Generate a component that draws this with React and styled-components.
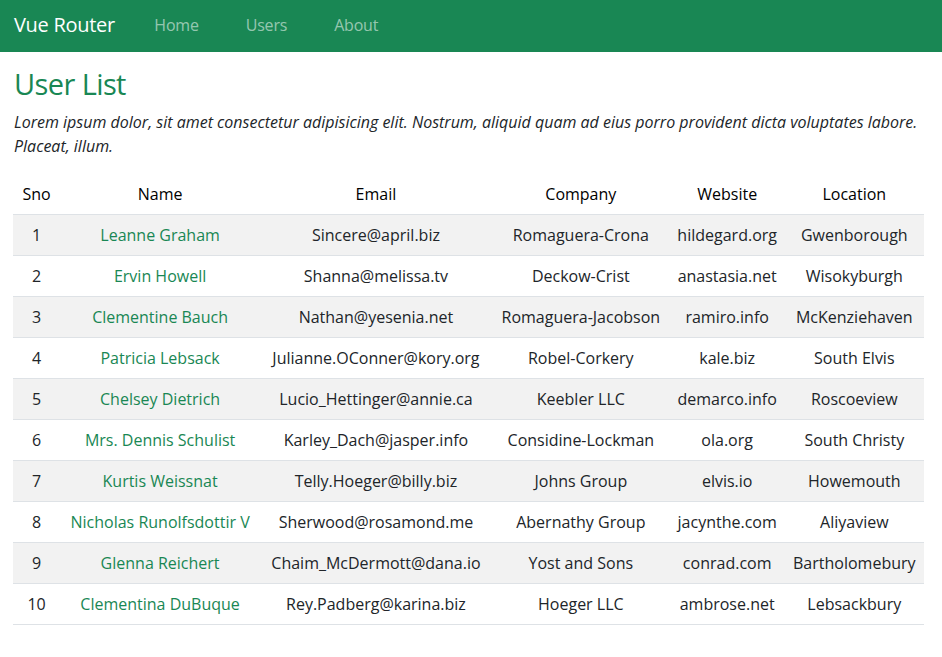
import React from 'react';
import styled, { createGlobalStyle } from 'styled-components';

const users = [
    ['Leanne Graham', 'Sincere@april.biz', 'Romaguera-Crona', 'hildegard.org', 'Gwenborough'],
    ['Ervin Howell', 'Shanna@melissa.tv', 'Deckow-Crist', 'anastasia.net', 'Wisokyburgh'],
    ['Clementine Bauch', 'Nathan@yesenia.net', 'Romaguera-Jacobson', 'ramiro.info', 'McKenziehaven'],
    ['Patricia Lebsack', 'Julianne.OConner@kory.org', 'Robel-Corkery', 'kale.biz', 'South Elvis'],
    ['Chelsey Dietrich', 'Lucio_Hettinger@annie.ca', 'Keebler LLC', 'demarco.info', 'Roscoeview'],
    ['Mrs. Dennis Schulist', 'Karley_Dach@jasper.info', 'Considine-Lockman', 'ola.org', 'South Christy'],
    ['Kurtis Weissnat', 'Telly.Hoeger@billy.biz', 'Johns Group', 'elvis.io', 'Howemouth'],
    ['Nicholas Runolfsdottir V', 'Sherwood@rosamond.me', 'Abernathy Group', 'jacynthe.com', 'Aliyaview'],
    ['Glenna Reichert', 'Chaim_McDermott@dana.io', 'Yost and Sons', 'conrad.com', 'Bartholomebury'],
    ['Clementina DuBuque', 'Rey.Padberg@karina.biz', 'Hoeger LLC', 'ambrose.net', 'Lebsackbury']
];

const GlobalStyle = createGlobalStyle`
    body {
        margin: 0;
        font-family: "Open Sans", "Noto Sans", sans-serif;
        font-size: 16px;
        line-height: 1.5;
        color: #212529;
        background: #fff;
    }
`;

const App = () => (
    <>
        <GlobalStyle />
        <Navbar>
            <Brand>Vue Router</Brand>
            <NavLink>Home</NavLink>
            <NavLink>Users</NavLink>
            <NavLink>About</NavLink>
        </Navbar>
        <Main>
            <Title>User List</Title>
            <Intro>
                Lorem ipsum dolor, sit amet consectetur adipisicing elit.
                Nostrum, aliquid quam ad eius porro provident dicta voluptates
                labore. Placeat, illum.
            </Intro>
            <Table>
                <thead>
                    <tr>
                        <Th>Sno</Th>
                        <Th>Name</Th>
                        <Th>Email</Th>
                        <Th>Company</Th>
                        <Th>Website</Th>
                        <Th>Location</Th>
                    </tr>
                </thead>
                <tbody>
                    {users.map((u, i) => (
                        <Row key={u[0]} striped={i % 2 === 0}>
                            <Td>{i + 1}</Td>
                            <Td>
                                <NameLink>{u[0]}</NameLink>
                            </Td>
                            <Td>{u[1]}</Td>
                            <Td>{u[2]}</Td>
                            <Td>{u[3]}</Td>
                            <Td>{u[4]}</Td>
                        </Row>
                    ))}
                </tbody>
            </Table>
        </Main>
    </>
);

export default App;

// Style
const Navbar = styled.nav`
    display: flex;
    align-items: center;
    height: 52px;
    padding: 0 14px 2px;
    box-sizing: border-box;
    background-color: #198754;
`;

const Brand = styled.span`
    font-size: 20px;
    letter-spacing: -0.3px;
    color: #fff;
    margin-right: 16px;
`;

const NavLink = styled.span`
    padding: 0 23.5px;
    letter-spacing: -0.2px;
    color: rgba(255, 255, 255, 0.55);
`;

const Main = styled.main`
    padding: 15px 17px 0 14px;
`;

const Title = styled.h1`
    margin: 0 0 8px;
    font-size: 29px;
    font-weight: 500;
    letter-spacing: -0.6px;
    line-height: 1.2;
    color: #198754;
`;

const Intro = styled.p`
    margin: 0 0 16px;
    font-style: italic;
`;

const Table = styled.table`
    width: 100%;
    border-collapse: collapse;
    text-align: center;
    margin-left: -1px;
`;

const Th = styled.th`
    padding: 8px;
    font-weight: 500;
    color: #000;
    border-bottom: 1px solid #dee2e6;
`;

const Row = styled.tr`
    background-color: ${props => (props.striped ? '#f2f2f2' : 'transparent')};
`;

const Td = styled.td`
    padding: 8px 4px;
    border-bottom: 1px solid #dee2e6;
`;

const NameLink = styled.span`
    color: #198754;
`;
